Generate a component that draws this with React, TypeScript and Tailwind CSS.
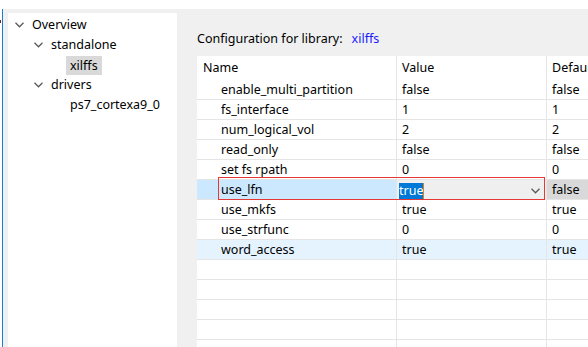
import React from 'react';

type Row = { name: string; value: string; def: string };

const rows: Row[] = [
  { name: 'enable_multi_partition', value: 'false', def: 'false' },
  { name: 'fs_interface', value: '1', def: '1' },
  { name: 'num_logical_vol', value: '2', def: '2' },
  { name: 'read_only', value: 'false', def: 'false' },
  { name: 'set fs rpath', value: '0', def: '0' },
  { name: 'use_lfn', value: 'true', def: 'false' },
  { name: 'use_mkfs', value: 'true', def: 'true' },
  { name: 'use_strfunc', value: '0', def: '0' },
  { name: 'word_access', value: 'true', def: 'true' },
];

const Chevron = ({ className = '' }: { className?: string }) => (
  <svg width="9" height="6" viewBox="0 0 9 6" className={className}>
    <path d="M0.5 0.8 L4.5 4.8 L8.5 0.8" fill="none" stroke="#5a5a5a" strokeWidth="1.3" />
  </svg>
);

const TreeItem = ({ label, depth, open, selected }: { label: string; depth: number; open?: boolean; selected?: boolean }) => (
  <div className="flex items-center h-5" style={{ paddingLeft: depth * 19 + 7 }}>
    <div className="w-[17px] flex items-center">{open && <Chevron />}</div>
    <span className={selected ? 'bg-[#d9d9d9] px-[4px] -ml-[4px] leading-[19px]' : ''}>{label}</span>
  </div>
);

const App = () => {
  return (
    <div
      className="w-[588px] h-[347px] overflow-hidden flex flex-col bg-white text-black text-[12.5px]"
      style={{ fontFamily: '"Noto Sans", "Noto Sans CJK SC", sans-serif' }}
    >
      <div className="h-[9px] shrink-0 bg-white" />
      <div className="flex flex-1 bg-[#f0f0f0] min-h-0">
        <div className="w-[2px] bg-white relative">
          <div className="absolute left-0 top-[11px] w-px h-[3px] bg-[#7a1f1f]" />
        </div>
        <div className="w-px bg-[#1a7fd4]" />
        <div className="pl-[5px] pt-[4px] flex">
          <div className="w-[169px] bg-white pt-[2px]">
            <TreeItem label="Overview" depth={0} open />
            <TreeItem label="standalone" depth={1} open />
            <TreeItem label="xilffs" depth={2} selected />
            <TreeItem label="drivers" depth={1} open />
            <TreeItem label="ps7_cortexa9_0" depth={2} />
          </div>
        </div>
        <div className="flex-1 min-w-0 pl-5 flex flex-col">
          <div className="h-[47px] shrink-0 flex items-end pb-[7px] gap-[9px]">
            <span>Configuration for library:</span>
            <span className="text-[#1a1aff]">xilffs</span>
          </div>
          <div className="w-[420px] bg-white flex-1">
            <div className="flex h-6 items-center">
              <div className="w-[200px] pl-[6px] pt-px h-full flex items-center border-r border-[#e5e5e5]">Name</div>
              <div className="w-[150px] pl-[5px] pt-px h-full flex items-center border-r border-[#e5e5e5]">Value</div>
              <div className="flex-1 pl-[5px] pt-px">Default</div>
            </div>
            {rows.map((r) => {
              const editing = r.name === 'use_lfn';
              const hover = r.name === 'word_access';
              return (
                <div key={r.name} className={`relative flex h-5 border-b border-[#e5e5e5] ${hover ? 'bg-[#e5f3ff]' : ''}`}>
                  <div className={`w-[200px] pl-6 pt-[2px] flex items-center border-r border-[#e5e5e5] ${editing ? 'bg-[#cce8ff]' : ''}`}>
                    {r.name}
                  </div>
                  {editing ? (
                    <div className="w-[150px] pt-[2px] flex items-center justify-between bg-[#efefef] border-r border-[#e5e5e5] pl-[2px] pr-[6px]">
                      <span className="flex items-center">
                        <span className="bg-[#0078d7] text-white leading-[16px]">true</span>
                        <span className="w-px h-[16px] bg-[#f57c00]" />
                      </span>
                      <Chevron />
                    </div>
                  ) : (
                    <div className="w-[150px] pl-[5px] pt-[2px] flex items-center border-r border-[#e5e5e5]">{r.value}</div>
                  )}
                  <div className={`flex-1 pl-[5px] pt-[2px] flex items-center ${editing ? 'bg-[#d9d9d9]' : ''}`}>{r.def}</div>
                  {editing && (
                    <div className="absolute left-[21px] top-[-3px] w-[327px] h-[23px] border border-[#e53935] pointer-events-none" />
                  )}
                </div>
              );
            })}
            {[0, 1, 2, 3, 4].map((i) => (
              <div key={i} className="flex h-5 border-b border-[#e5e5e5]">
                <div className="w-[200px] border-r border-[#e5e5e5]" />
                <div className="w-[150px] border-r border-[#e5e5e5]" />
                <div className="flex-1" />
              </div>
            ))}
          </div>
        </div>
      </div>
    </div>
  );
};

export default App;
